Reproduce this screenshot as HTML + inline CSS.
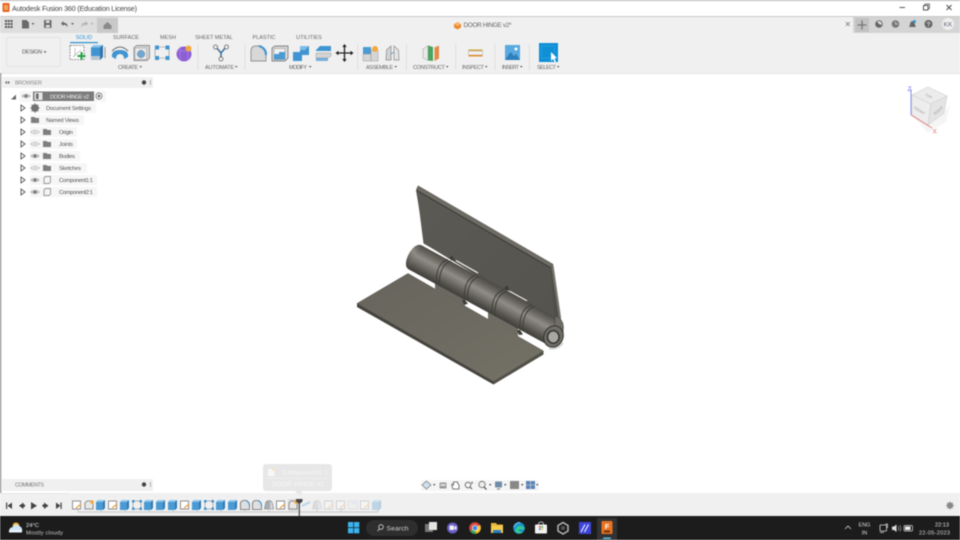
<!DOCTYPE html>
<html><head><meta charset="utf-8"><title>Fusion 360</title>
<style>
html,body{margin:0;padding:0;background:#fff;width:960px;height:540px;overflow:hidden}
svg{display:block;position:absolute;left:0;top:0;filter:blur(.5px)}
text{font-family:"Liberation Sans",sans-serif;fill:#666}
</style></head><body>
<svg width="960" height="540" viewBox="0 0 960 540" xmlns="http://www.w3.org/2000/svg">
<defs>
<linearGradient id="barrel" gradientUnits="userSpaceOnUse" x1="421" y1="245" x2="408" y2="269">
<stop offset="0" stop-color="#4f4d47"/><stop offset=".2" stop-color="#6a6861"/><stop offset=".42" stop-color="#8f8d86"/><stop offset=".62" stop-color="#74726b"/><stop offset=".85" stop-color="#524f4a"/><stop offset="1" stop-color="#3f3e39"/>
</linearGradient>
<linearGradient id="upper" x1="0" y1="0" x2="1" y2="1"><stop offset="0" stop-color="#5c5a54"/><stop offset="1" stop-color="#56544e"/></linearGradient>
<linearGradient id="lower" x1="0" y1="0" x2="1" y2="1"><stop offset="0" stop-color="#66645c"/><stop offset="1" stop-color="#747266"/></linearGradient>
<g id="ext"><path d="M-5 -3 L-3 -5 H4 V3 L2 5 H-5Z" fill="#4a9ad4"/><path d="M2 -3 L4 -5 V3 L2 5Z" fill="#2f79b3"/><path d="M-5 -3 L-3 -5 H4 L2 -3Z" fill="#8cc4ea"/></g>
<g id="sk"><rect x="-4.5" y="-4" width="8" height="8" fill="#fff" stroke="#777" stroke-width=".8"/><path d="M-1 3 L4 -1" stroke="#e8a33d" stroke-width="1.2"/></g>
<g id="comp"><path d="M-4 -2 L-2 -4 H4 V4 H-4Z" fill="#e8e8e8" stroke="#777" stroke-width=".8"/><circle cx="3" cy="-3" r="1.8" fill="#f2a93b"/></g>
<g id="pat"><rect x="-4" y="-4" width="8" height="8" fill="none" stroke="#888" stroke-width=".6"/><rect x="-5" y="-5" width="2.5" height="2.5" fill="#3f94d1"/><rect x="2.5" y="-5" width="2.5" height="2.5" fill="#3f94d1"/><rect x="-5" y="2.5" width="2.5" height="2.5" fill="#3f94d1"/><rect x="2.5" y="2.5" width="2.5" height="2.5" fill="#3f94d1"/></g>
<g id="fil"><path d="M-4.5 4.5 V-1 Q-4.5 -4.5 -1 -4.5 H1 Q4.5 -3 4.5 1 V4.5Z" fill="#dfdfdf" stroke="#6d6d6d" stroke-width=".8"/><path d="M1 -4.5 Q4.5 -3 4.5 1" stroke="#3f94d1" stroke-width="1.2" fill="none"/></g>
<g id="jnt"><path d="M-4.5 4 L-3 -3 L-.5 -4.5 L-.5 4Z" fill="#aab4bc" stroke="#777" stroke-width=".6"/><path d="M4.5 4 L3 -3 L.8 -4.5 L.8 4Z" fill="#d8dde2" stroke="#777" stroke-width=".6"/></g>
<g id="pl"><rect x="-4.5" y="-4" width="9" height="8" fill="#eee" stroke="#aaa" stroke-width=".7"/><rect x="-1" y="-4" width="5.5" height="3.5" fill="#cde"/></g>
<g id="tri"><path d="M-2 -3 L2 0 L-2 3Z" fill="#fff" stroke="#555" stroke-width=".9"/></g>
<g id="eye"><path d="M-4.5 0 Q0 -3.6 4.5 0 Q0 3.6 -4.5 0Z" fill="#c6c6c6" stroke="#999" stroke-width=".5"/><circle r="1.5" fill="#777"/></g>
<g id="eyeo"><path d="M-4.5 0 Q0 -3.6 4.5 0 Q0 3.6 -4.5 0Z" fill="#eee" stroke="#bbb" stroke-width=".6"/><circle r="1.4" fill="#d6d6d6"/></g>
<g id="fold"><path d="M-4 -3 H-.5 L.5 -2 H4 V3 H-4Z" fill="#7f7f7f"/></g>
<g id="cb"><path d="M-3 -2 L-1.5 -3.500 H3.500 V2 L2 3.500 H-3Z" fill="#f4f4f4" stroke="#777" stroke-width=".7"/></g>
</defs>

<!-- Window frame and title -->
<rect width="960" height="540" fill="#fff"/>
<rect width="960" height="1" fill="#b5b5b5"/>
<rect x="2.500" y="3" width="7" height="9" rx="1" fill="#e6641e"/><rect x="4" y="5" width="4" height="5" fill="#f5a05f"/>
<text x="12" y="10.800" font-size="7.200" textLength="125" style="fill:#444">Autodesk Fusion 360 (Education License)</text>
<path d="M899.500 7.500H905" stroke="#444" stroke-width=".9"/>
<rect x="923.500" y="5.500" width="4.500" height="4.500" fill="#fff" stroke="#444" stroke-width=".9"/><path d="M925 5V4H929.500V8.500H928.500" fill="none" stroke="#444" stroke-width=".7"/>
<path d="M946.500 5L951.500 10M951.500 5L946.500 10" stroke="#444" stroke-width=".9"/>

<!-- Tab strip -->
<rect y="16" width="960" height="1" fill="#c8c8c8"/>
<rect y="17" width="960" height="56" fill="#f0f0f0"/>
<rect y="17" width="118" height="16" fill="#dedede"/>
<rect x="97" y="18" width="21" height="15" fill="#c9c9c9"/>
<path d="M103.500 25.500L107.500 22L111.500 25.500V29H103.500Z" fill="#8a8a8a"/>
<g fill="#555"><rect x="5" y="20" width="2" height="2"/><rect x="7.800" y="20" width="2" height="2"/><rect x="10.600" y="20" width="2" height="2"/><rect x="5" y="23" width="2" height="2"/><rect x="7.800" y="23" width="2" height="2"/><rect x="10.600" y="23" width="2" height="2"/><rect x="5" y="26" width="2" height="2"/><rect x="7.800" y="26" width="2" height="2"/><rect x="10.600" y="26" width="2" height="2"/></g>
<path d="M22 20H26.500L29 22.500V28.500H22Z" fill="#6a6a6a"/><path d="M31.500 23H34.500L33 25Z" fill="#666"/>
<rect x="44" y="20" width="7.500" height="8" rx=".6" fill="#6c6c6c"/><rect x="46" y="20.500" width="3.500" height="2.500" fill="#ddd"/><rect x="45.800" y="25" width="4" height="2.500" fill="#ddd"/>
<path d="M61 23.500L63.500 21V22.800C66.500 22.800 67.800 24.300 67.500 27.500C66.800 25.500 65.800 24.800 63.500 24.800V26Z" fill="#666"/><path d="M71 23H74L72.500 25Z" fill="#666"/>
<path d="M88 23.500L85.500 21V22.800C82.500 22.800 81.200 24.300 81.500 27.500C82.200 25.500 83.200 24.800 85.500 24.800V26Z" fill="#b0b0b0"/><path d="M90.500 23H93.500L92 25Z" fill="#b0b0b0"/>

<!-- Document tab -->
<path d="M457.500 22L461 24V27.500L457.500 29.500L454 27.500V24Z" fill="#ec8a2c"/><path d="M457.500 22L461 24L457.500 26L454 24Z" fill="#f7b56c"/>
<text x="463.500" y="27" font-size="6.400" textLength="48">DOOR HINGE v2*</text>
<path d="M845.800 22L849.800 26M849.800 22L845.800 26" stroke="#777" stroke-width=".8"/>
<rect x="853" y="17" width="107" height="16" fill="#d4d4d4"/>
<rect x="855" y="18" width="14" height="14" fill="#c2c2c2"/>
<path d="M862 20.500V29.500M857.500 25H866.500" stroke="#777" stroke-width="1.300"/>
<circle cx="879" cy="24" r="3.800" fill="#666"/><path d="M877 21.500A3.300 3.300 0 0 1 881.800 25L879 24Z" fill="#ddd"/>
<circle cx="895.500" cy="24" r="3.800" fill="#777"/><path d="M895.500 21.500V24H898" stroke="#ddd" stroke-width=".7" fill="none"/>
<path d="M909 27C910.200 26 909.800 21 912.500 21C915.200 21 914.800 26 916 27Z" fill="#666"/><circle cx="914.500" cy="21.500" r="1.500" fill="#2a98dd"/>
<circle cx="928.500" cy="24" r="4" fill="#666"/><text x="928.500" y="26.300" font-size="6.500" font-weight="bold" text-anchor="middle" style="fill:#ddd">?</text>
<circle cx="948" cy="24" r="6" fill="#efefef"/><text x="948" y="26.300" font-size="6.500" text-anchor="middle" style="fill:#667">KK</text>

<!-- Design button -->
<rect x="6.500" y="37.500" width="54" height="29" rx="2" fill="#f0f0f0" stroke="#e2e2e2"/>
<text x="22" y="53.500" font-size="5.600" textLength="20" style="fill:#555">DESIGN</text><path d="M43.500 51.200H46.500L45 53Z" fill="#555"/>

<!-- Tabs -->
<g font-size="5.500" text-anchor="middle">
<text x="84" y="39" style="fill:#2b8fd0">SOLID</text>
<text x="126" y="39">SURFACE</text>
<text x="168" y="39">MESH</text>
<text x="214" y="39">SHEET METAL</text>
<text x="264" y="39">PLASTIC</text>
<text x="309" y="39">UTILITIES</text>
</g>
<rect x="70" y="42" width="28" height="1.200" fill="#2b8fd0"/>

<!-- Toolbar icons -->
<rect x="70" y="45.500" width="14" height="14" fill="#fff" stroke="#777" stroke-width=".8" stroke-dasharray="2 1"/><path d="M73 57L81 50M75 48V56" stroke="#aaa" stroke-width=".7"/>
<path d="M81.500 52V60M77.500 56H85.500" stroke="#26a244" stroke-width="2"/>
<path d="M91 47.500L94 45H103V57L100 60H91Z" fill="#3f94d1"/><path d="M91 47.500L94 45H103L100 47.500Z" fill="#88c3ea"/><path d="M100 47.500L103 45V57L100 60Z" fill="#2f75ab"/><path d="M91 56H100V60H91Z" fill="#b9c6cf"/><path d="M105 47V58" stroke="#555" stroke-width=".6"/>
<path d="M112 57Q111 50 120 50Q129 50 128 57L124 59Q124 54 120 54Q116 54 116 59Z" fill="#3f94d1"/><path d="M112 51Q120 43 128 51" stroke="#444" stroke-width=".8" fill="none"/>
<path d="M134 47.500L137 45.500H149.500V58L147 60.500H134Z" fill="#d3d3d3" stroke="#777" stroke-width=".7"/><rect x="135" y="48" width="11.500" height="11.500" fill="#ececec" stroke="#999" stroke-width=".5"/><circle cx="141" cy="54" r="3.800" fill="#6fa8d2" stroke="#888" stroke-width=".5"/>
<path d="M157 47H167M157 58H167M155 49V56M169 49V56" stroke="#888" stroke-width=".6"/><rect x="155" y="45.500" width="4" height="4" fill="#3f94d1"/><rect x="165.500" y="45.500" width="4" height="4" fill="#3f94d1"/><rect x="155" y="56" width="4" height="4" fill="#3f94d1"/><rect x="165.500" y="56" width="4" height="4" fill="#3f94d1"/>
<circle cx="184" cy="54" r="7.500" fill="#8d5fd3"/><path d="M177 51H191M180 47V60M188 47V60" stroke="#a880e3" stroke-width=".7"/><circle cx="188.500" cy="48.500" r="3" fill="#f2a93b"/>
<rect x="197.500" y="44" width=".8" height="26" fill="#dcdcdc"/>
<path d="M221 53L216 47M221 53L226 47M221 53V59" stroke="#3b6f9b" stroke-width="1.500"/><circle cx="215.500" cy="47" r="2" fill="#eee" stroke="#666" stroke-width=".8"/><circle cx="226.500" cy="47" r="2" fill="#eee" stroke="#666" stroke-width=".8"/><circle cx="221" cy="59" r="2" fill="#eee" stroke="#666" stroke-width=".8"/>
<rect x="244.500" y="44" width=".8" height="26" fill="#dcdcdc"/>
<path d="M251 61V51Q251 46 256 46H259Q266 48 266 55V61Z" fill="#d8d8d8" stroke="#777" stroke-width=".7"/><path d="M259 46Q266 48 266 55" stroke="#3f94d1" stroke-width="2.200" fill="none"/>
<path d="M272 48L275 46H288V58L285 61H272Z" fill="#d8d8d8" stroke="#666" stroke-width=".7"/><rect x="274" y="48.500" width="11" height="11" fill="#f2f2f2" stroke="#888" stroke-width=".5"/><path d="M274 59.500V54H279V52H285V59.500Z" fill="#4a9ad4"/>
<path d="M293 52H300V46H309V55H302V61H293Z" fill="#3f94d1"/><path d="M300 46H309L305 50H300Z" fill="#7dbce6"/>
<path d="M316 50L320 46H331V51H316Z" fill="#3f94d1"/><path d="M316 53H331V56L328 58H316Z" fill="#d4d4d4" stroke="#888" stroke-width=".4"/><path d="M316 58H328V61H316Z" fill="#3f94d1" opacity=".7"/>
<path d="M344.500 45V61M336.500 53H352.500" stroke="#222" stroke-width="1.300"/><path d="M344.500 44L342.300 47H346.700ZM344.500 62L342.300 59H346.700ZM335.500 53L338.500 50.800V55.200ZM353.500 53L350.500 50.800V55.200Z" fill="#222"/>
<rect x="357.300" y="44" width=".8" height="26" fill="#dcdcdc"/>
<rect x="363" y="47" width="8" height="7" fill="#4a9ad4"/><path d="M363 54H371V61H363Z" fill="#d5d5d5" stroke="#888" stroke-width=".4"/><path d="M371 50H378V61H371Z" fill="#d5d5d5" stroke="#888" stroke-width=".4"/><circle cx="375" cy="49" r="3" fill="#f2a93b"/>
<path d="M386 60L386.500 50L391 46V60Z" fill="#d3d3d3" stroke="#888" stroke-width=".7"/><path d="M399 60L398.500 50L394 46V60Z" fill="#e4e4e4" stroke="#888" stroke-width=".7"/><path d="M391 54L394 52" stroke="#5a9acb" stroke-width="1"/>
<rect x="406" y="44" width=".8" height="26" fill="#dcdcdc"/>
<path d="M423 49L428 45.500V60.500L423 58Z" fill="#e7e7e7" stroke="#999" stroke-width=".5"/><path d="M428 45.500L433 47V61L428 60.500Z" fill="#4aa35f"/><path d="M434.500 47.500L439 45.500V58.500L434.500 61Z" fill="#e38a46"/>
<rect x="455.300" y="44" width=".8" height="26" fill="#dcdcdc"/>
<rect x="468.500" y="49.500" width="14" height="1.500" fill="#d3a63a"/><rect x="468.500" y="51" width="14" height="4" fill="#f2f2f2" stroke="#999" stroke-width=".4"/><rect x="468.500" y="55" width="14" height="1.500" fill="#e58c2c"/>
<rect x="494.500" y="44" width=".8" height="26" fill="#dcdcdc"/>
<rect x="505" y="45" width="15" height="15" fill="#5aa9de"/><path d="M505 60L510.500 52L514 56L516 54L520 60Z" fill="#2c7fbb"/><circle cx="516" cy="49" r="1.500" fill="#fff"/>
<rect x="529" y="44" width=".8" height="26" fill="#dcdcdc"/>
<rect x="539" y="43" width="19" height="19" fill="#0f8fd6"/><rect x="541.500" y="46" width="13" height="12" fill="none" stroke="#45b0e8" stroke-width=".7" stroke-dasharray="1.500 1"/><path d="M551 52V61L553 59L554.500 62L556 61.400L554.500 58.500L557 58Z" fill="#fff"/>

<!-- Toolbar labels -->
<g font-size="5.500">
<text x="118" y="69" textLength="20">CREATE</text>
<text x="205" y="69" textLength="29">AUTOMATE</text>
<text x="289" y="69" textLength="18">MODIFY</text>
<text x="366" y="69" textLength="27">ASSEMBLE</text>
<text x="413" y="69" textLength="32">CONSTRUCT</text>
<text x="462" y="69" textLength="22">INSPECT</text>
<text x="502" y="69" textLength="17">INSERT</text>
<text x="537" y="69" textLength="19">SELECT</text>
</g>
<g fill="#555"><path d="M139.500 66H142L140.700 67.800Z"/><path d="M235 66H237.500L236.200 67.800Z"/><path d="M309 66H311.500L310.200 67.800Z"/><path d="M394.500 66H397L395.700 67.800Z"/><path d="M446 66H448.500L447.200 67.800Z"/><path d="M485 66H487.500L486.200 67.800Z"/><path d="M520 66H522.500L521.200 67.800Z"/><path d="M557 66H559.500L558.200 67.800Z"/></g>
<rect y="73" width="960" height="1" fill="#e6e6e6"/>

<!-- left edge -->
<rect x="0" y="73" width="1.200" height="443" fill="#8a8a8a"/>

<!-- Browser -->
<rect x="2" y="77" width="151" height="11" rx="1" fill="#f0f0f0"/>
<text x="15" y="84.300" font-size="5.500" textLength="27" style="fill:#888">BROWSER</text>
<path d="M5 82.500L7 81V84ZM10 82.500L8 81V84Z" fill="#555"/>
<circle cx="144" cy="82.500" r="2.200" fill="#444"/><rect x="150" y="80" width=".8" height="5" fill="#999"/>

<rect x="20" y="91" width="86" height="11" fill="#f6f6f6"/>
<path d="M11 99.500L16 94.500V99.500Z" fill="#666"/>
<use href="#eye" x="26" y="96"/>
<rect x="33" y="91.500" width="61" height="9.500" fill="#7b7b7b"/>
<rect x="34.500" y="92.500" width="8" height="7.500" fill="#e6e6e6"/><rect x="36" y="93.500" width="2.500" height="5.500" fill="#666"/>
<text x="50" y="98.500" font-size="5.500" textLength="39" style="fill:#f0f0f0">DOOR HINGE v2</text>
<circle cx="99" cy="96" r="3" fill="#fff" stroke="#555" stroke-width=".7"/><circle cx="99" cy="96" r="1.300" fill="#555"/>

<g fill="#f6f6f6">
<rect x="30" y="103" width="66" height="10"/><rect x="30" y="115" width="54" height="10"/>
<rect x="30" y="127" width="47" height="10"/><rect x="30" y="139" width="47" height="10"/>
<rect x="30" y="151" width="50" height="10"/><rect x="30" y="163" width="57" height="10"/>
<rect x="30" y="175" width="67" height="10"/><rect x="30" y="187" width="67" height="10"/>
</g>
<use href="#tri" x="23" y="108"/><use href="#tri" x="23" y="120"/><use href="#tri" x="23" y="132"/><use href="#tri" x="23" y="144"/><use href="#tri" x="23" y="156"/><use href="#tri" x="23" y="168"/><use href="#tri" x="23" y="180"/><use href="#tri" x="23" y="192"/>
<circle cx="35" cy="108" r="3.800" fill="#6f6f6f"/><circle cx="35" cy="108" r="1.500" fill="#eee"/><path d="M35 103.300V112.700M30.300 108H39.700M31.700 104.700L38.300 111.300M38.300 104.700L31.700 111.300" stroke="#6f6f6f" stroke-width="1"/>
<use href="#fold" x="35" y="120"/>
<use href="#eyeo" x="35" y="132"/><use href="#eyeo" x="35" y="144"/><use href="#eye" x="35" y="156"/><use href="#eyeo" x="35" y="168"/><use href="#eye" x="35" y="180"/><use href="#eye" x="35" y="192"/>
<use href="#fold" x="47" y="132"/><use href="#fold" x="47" y="144"/><use href="#fold" x="47" y="156"/><use href="#fold" x="47" y="168"/>
<use href="#cb" x="47" y="180"/><use href="#cb" x="47" y="192"/>
<g font-size="5.800">
<text x="46" y="110" textLength="45" style="fill:#555">Document Settings</text>
<text x="46" y="122" textLength="33" style="fill:#555">Named Views</text>
<text x="59" y="134" textLength="14" style="fill:#555">Origin</text>
<text x="59" y="146" textLength="14" style="fill:#555">Joints</text>
<text x="59" y="158" textLength="16" style="fill:#555">Bodies</text>
<text x="59" y="170" textLength="22" style="fill:#555">Sketches</text>
<text x="59" y="182" textLength="34" style="fill:#555">Component1:1</text>
<text x="59" y="194" textLength="34" style="fill:#555">Component2:1</text>
</g>

<!-- ViewCube -->
<path d="M912 115L928 125L944 113L950 104L946 122L928 133Z" fill="#eee" opacity=".6"/>
<path d="M928 87L947 96L931 104L912 95Z" fill="#ececec" stroke="#cfcfcf" stroke-width=".6"/>
<path d="M912 95L931 104L928 125L912 115Z" fill="#ededed" stroke="#cfcfcf" stroke-width=".6"/>
<path d="M931 104L947 96L944 113L928 125Z" fill="#e4e4e4" stroke="#cfcfcf" stroke-width=".6"/>
<path d="M911 115V89" stroke="#7d7ff0" stroke-width=".9"/><path d="M911 115L932 128" stroke="#e87f7f" stroke-width=".9"/>
<text x="907.500" y="91" font-size="6.500" style="fill:#6a6cf0">Z</text>
<text x="932.500" y="133.500" font-size="6.500" style="fill:#e06a6a">X</text>
<text x="929" y="97.500" font-size="3.600" text-anchor="middle" style="fill:#999" transform="rotate(25 929 96)">TOP</text>
<text x="920" y="112" font-size="3.600" text-anchor="middle" style="fill:#999" transform="rotate(32 920 110)">FRONT</text>
<text x="938" y="112" font-size="3.600" text-anchor="middle" style="fill:#999" transform="rotate(-40 938 110)">RIGHT</text>

<!-- Hinge: upper leaf -->
<path d="M418 185.500L553 264L561 320L553 322L425 244L416 190Z" fill="#504e48"/>
<path d="M416.800 190.500L550 267.500L554.500 317L423.500 243.500Z" fill="url(#upper)"/>
<path d="M418.500 186L553 264L550 267.500L416.500 190Z" fill="#6d6b64"/>
<path d="M416.800 190.500L550 267.500" stroke="#34332e" stroke-width=".9"/>
<path d="M552.500 266L560 318" stroke="#77756d" stroke-width="2.200"/>

<!-- Hinge: lower leaf -->
<path d="M357 303.500L408 273.500L543.500 351L493.500 381.500Z" fill="url(#lower)" stroke="#504f49" stroke-width=".5"/>
<path d="M357 303.500V307L493.500 384.500V381.500Z" fill="#44433d"/>
<path d="M493.500 381.500V384.500L543.500 354.500V351Z" fill="#504f48"/>
<!-- leaf tabs reaching the knuckles -->
<path d="M435 288.600V282L465 298V306.400Z" fill="#6a6860"/>
<path d="M488 319.700V312L518 328V337Z" fill="#6e6c62"/>

<!-- Hinge: barrel -->
<ellipse cx="414.500" cy="257" rx="6.500" ry="13.500" transform="rotate(28 414.500 257)" fill="url(#barrel)"/>
<path d="M421 245L561 321L548 345L408 269Z" fill="url(#barrel)"/>
<path d="M456 260.500L478 273M507 289.800L527 300.800" stroke="#fff" stroke-width="1.100"/>
<g fill="none" stroke="#3f3e39" stroke-width="1">
<path d="M448 259.500Q435.500 263.500 436.500 283.500"/><path d="M451 261Q438.500 265.500 439.500 285.500"/>
<path d="M476 275Q463.500 279 464.500 299"/><path d="M479 276.500Q466.500 281 467.500 301"/>
<path d="M503.500 290Q491 294 492 314"/><path d="M506.500 291.500Q494 296 495 316"/>
<path d="M531.500 305Q519 309 520 329"/><path d="M534.500 306.500Q522 311 523 331"/>
</g>
<path d="M449 258L452 255.500L455 261L451 260Z" fill="#3c3b36"/><path d="M504 288L507 285.500L510 291L506 290Z" fill="#3c3b36"/>
<path d="M462 300L464 304.500L468 304L465 300Z" fill="#3c3b36"/><path d="M517 330L519 335L523 334.500L520 330Z" fill="#3c3b36"/>
<path d="M555 316Q563 318 563.500 327Q563.500 332 562 338L555 325Z" fill="#6f6d66" stroke="#3f3e39" stroke-width=".5"/>
<ellipse cx="553.500" cy="336.500" rx="9.500" ry="11" transform="rotate(25 553.500 336.500)" fill="#6f6d66" stroke="#35342f" stroke-width="1"/>
<ellipse cx="553.300" cy="337" rx="5.800" ry="6.200" fill="#a8a7a1" stroke="#33322d" stroke-width="1.500"/>
<path d="M563 343Q558 350 549 348.500" stroke="#d4d4d4" stroke-width="1.800" fill="none"/>

<!-- Comments -->
<rect x="2" y="479" width="151" height="12" rx="1" fill="#f0f0f0"/>
<text x="15" y="486.500" font-size="5.500" textLength="29" style="fill:#777">COMMENTS</text>
<circle cx="144" cy="484.500" r="2.200" fill="#444"/><rect x="150" y="482" width=".8" height="5" fill="#999"/>

<!-- Nav bar -->
<rect x="421" y="480" width="118" height="11" fill="#f5f5f5"/>
<path d="M426.500 481L431 485L426.500 489L422 485Z" fill="#cfe0ee" stroke="#777" stroke-width=".7"/><path d="M433 484H435.500L434.200 486Z" fill="#555"/>
<rect x="439.500" y="482.500" width="7" height="6" rx=".8" fill="#999"/><rect x="440.500" y="484" width="5" height="2" fill="#ddd"/>
<path d="M453 489Q451.500 486 452 484L453.500 485V482H457.500V483L459 485V489Z" fill="#fff" stroke="#555" stroke-width=".8"/>
<circle cx="468" cy="485" r="2.800" fill="none" stroke="#555" stroke-width=".8"/><path d="M470 487L472 489" stroke="#555"/><path d="M472 481.500V484M471 482.700H473" stroke="#555" stroke-width=".6"/>
<circle cx="482" cy="484.500" r="3.200" fill="#eee" stroke="#666" stroke-width=".8"/><path d="M484 487L486.500 489.500" stroke="#333" stroke-width="1"/><path d="M489 484H491.500L490.200 486Z" fill="#555"/>
<rect x="495" y="481.500" width="7" height="6" rx=".6" fill="#6f8da8"/><path d="M497 489H500" stroke="#777"/><path d="M504 484H506.500L505.200 486Z" fill="#555"/>
<rect x="510" y="481" width="9" height="8" fill="#888"/><path d="M521 484H523.500L522.200 486Z" fill="#555"/>
<rect x="526" y="481" width="9" height="8" fill="#5a83b4"/><path d="M530.500 481V489M526 485H535" stroke="#ddd" stroke-width=".6"/><path d="M536 484H538.500L537.200 486Z" fill="#555"/>

<!-- Timeline -->
<rect y="493" width="960" height="23" fill="#f0f0f0"/>
<rect y="493" width="70" height="1" fill="#e4e4e4"/>
<g fill="#444">
<rect x="6" y="502.500" width="1.200" height="6.500"/><path d="M12 502.500V509L7.500 505.700Z"/>
<path d="M19 505.700L23.500 502.500V509Z"/><rect x="23" y="504.500" width="2" height="2.400"/>
<path d="M31 502V509.500L37 505.700Z"/>
<path d="M48.500 505.700L44 502.500V509Z"/><rect x="42.500" y="504.500" width="2" height="2.400"/>
<path d="M56 502.500V509L60.500 505.700Z"/><rect x="60.500" y="502.500" width="1.200" height="6.500"/>
</g>
<path d="M78 509V512H378V509" fill="none" stroke="#bcbcbc" stroke-width=".7"/>
<path d="M101 512V509M125 512V509M149 512V509M173 512V509M197 512V509M221 512V509M245 512V509M269 512V509M293 512V509M317 512V509M341 512V509" stroke="#bcbcbc" stroke-width=".6"/>
<rect x="288" y="499" width="12" height="12" fill="#dcdcdc"/>
<g transform="translate(0 505)">
<use href="#sk" x="77"/><use href="#comp" x="89"/><use href="#ext" x="101"/><use href="#sk" x="113"/><use href="#ext" x="125"/><use href="#pat" x="137"/><use href="#ext" x="149"/><use href="#ext" x="161"/><use href="#ext" x="173"/><use href="#sk" x="185"/><use href="#ext" x="197"/><use href="#pat" x="209"/><use href="#ext" x="221"/><use href="#ext" x="233"/><use href="#fil" x="245"/><use href="#fil" x="257"/><use href="#jnt" x="269"/><use href="#sk" x="281"/><use href="#comp" x="293"/>
<g opacity=".3"><path d="M302 506L310 502" stroke="#3f94d1" stroke-width="2" transform="translate(0 -505)"/><use href="#jnt" x="317"/><use href="#sk" x="329"/><use href="#sk" x="341"/><use href="#pl" x="353"/><use href="#sk" x="365"/><use href="#ext" x="377"/></g>
</g>
<rect x="298.700" y="500" width="1.200" height="16" fill="#444"/><path d="M296 499H302.500V501.500L299.300 504L296 501.500Z" fill="#444"/>
<circle cx="950" cy="505.500" r="3" fill="#888"/><circle cx="950" cy="505.500" r="1.200" fill="#f0f0f0"/><path d="M950 501.500V509.500M946 505.500H954M947.200 502.700L952.800 508.300M952.800 502.700L947.200 508.300" stroke="#888"/>

<!-- Tooltip -->
<rect x="263" y="464" width="69" height="27" rx="3" fill="#e7e7e7"/>
<path d="M295 491H303L299 495Z" fill="#e7e7e7"/>
<rect x="268" y="469" width="6.500" height="7" fill="#f7f7f7"/><circle cx="273.500" cy="469.500" r="1.500" fill="#f8e7c4"/>
<text x="282" y="474.500" font-size="6.500" textLength="46" style="fill:#f8f8f8">Component2:1</text>
<rect x="267" y="478" width="62" height=".7" fill="#f2f2f2"/>
<text x="272" y="486" font-size="6.500" textLength="52" style="fill:#f8f8f8">DOOR HINGE v2</text>

<!-- Taskbar -->
<rect y="516" width="960" height="24" fill="#1c1c1c"/>
<circle cx="16" cy="526" r="3.500" fill="#f3b23c"/><path d="M9 532Q9 527 13 527Q15 522 19 526Q23 527 22 532Z" fill="#cfe4f8"/><path d="M9 530H22V532.500H9Z" fill="#eaf3fb"/>
<text x="26" y="527" font-size="5.800" style="fill:#e8e8e8">24°C</text>
<text x="26" y="534.500" font-size="5.800" textLength="37" style="fill:#c8c8c8">Mostly cloudy</text>
<g fill="#3ab3ee"><rect x="348" y="522" width="5.300" height="5.300"/><rect x="354" y="522" width="5.300" height="5.300"/><rect x="348" y="528" width="5.300" height="5.300"/><rect x="354" y="528" width="5.300" height="5.300"/></g>
<rect x="366" y="520" width="52" height="16" rx="8" fill="#2e2e2e"/>
<circle cx="381" cy="527" r="2.300" fill="none" stroke="#ddd" stroke-width=".8"/><path d="M379.500 529L377.500 531" stroke="#ddd" stroke-width=".8"/>
<text x="386.500" y="530.500" font-size="6.800" textLength="22" style="fill:#cfcfcf">Search</text>
<rect x="425" y="524" width="8" height="8" fill="#777"/><rect x="429" y="522" width="8" height="8" fill="#e4e4e4"/>
<circle cx="452.500" cy="528" r="5.500" fill="#6a5fc8"/><rect x="449.500" y="525.500" width="4.500" height="4.500" rx=".6" fill="#f0f0f0"/><path d="M454.500 527L456.500 525.800V530L454.500 529Z" fill="#f0f0f0"/>
<circle cx="475" cy="528" r="5.800" fill="#e0473a"/><path d="M475 528L470 531Q472.500 534.500 476 533.700Z" fill="#3aa757"/><path d="M475 528L476 533.700Q480.800 532.500 480.800 528Q480.800 525.500 480 525Z" fill="#f7c52d"/><circle cx="475" cy="528" r="2.700" fill="#3f83e8" stroke="#fff" stroke-width=".7"/>
<path d="M491 523H496L497 524.500H503V526H491Z" fill="#e9b93a"/><rect x="491" y="526" width="12" height="7" fill="#f5cb4e"/><rect x="493" y="530" width="8" height="3" fill="#2a7fc4"/>
<circle cx="519" cy="528" r="5.800" fill="#1a8fce"/><path d="M515 530Q517 525 521 526Q525 527 524.800 529.500H518.500Q518.800 532 523 532Q520 534.500 517 533Q514.500 532 515 530Z" fill="#34c98f"/><path d="M514 527Q516 522.500 520 522.500" stroke="#7ddcf2" stroke-width="1" fill="none"/>
<rect x="535" y="524.500" width="12" height="9" rx="1" fill="#f2f2f2"/><path d="M538.500 524.500Q538.500 522 541 522Q543.500 522 543.500 524.500" stroke="#ddd" fill="none" stroke-width=".8"/><rect x="539" y="526" width="1.700" height="1.700" fill="#e84c3d"/><rect x="541.300" y="526" width="1.700" height="1.700" fill="#3eb35c"/><rect x="539" y="528.300" width="1.700" height="1.700" fill="#2d8fe0"/><rect x="541.300" y="528.300" width="1.700" height="1.700" fill="#f4c236"/>
<path d="M563 522.500L568 525.500V531L563 534L558 531V525.500Z" fill="none" stroke="#b5b5b5" stroke-width="1.500"/><circle cx="563" cy="528" r="2" fill="#555"/>
<rect x="579" y="522" width="12" height="12" fill="#3e46d8"/><path d="M581 532L585 524.500M584.500 532L588.500 524.500" stroke="#eef" stroke-width="1.100"/>
<rect x="597" y="518" width="20" height="22" rx="1" fill="#333"/>
<rect x="601.500" y="521" width="11" height="13" rx="1" fill="#e8721f"/><rect x="604" y="530.500" width="6" height="2" fill="#6c3410"/>
<text x="607" y="529" font-size="7.500" font-weight="bold" text-anchor="middle" style="fill:#fff">F</text>
<rect x="603" y="537.500" width="8" height="1.500" rx=".7" fill="#58c4f2"/>

<!-- Tray -->
<path d="M845 529L848 526L851 529" fill="none" stroke="#ccc" stroke-width=".8"/>
<text x="864.500" y="526.500" font-size="5.500" text-anchor="middle" style="fill:#d8d8d8">ENG</text>
<text x="864.500" y="534.500" font-size="5.500" text-anchor="middle" style="fill:#d8d8d8">IN</text>
<rect x="880" y="525" width="6.500" height="6" rx=".6" fill="none" stroke="#ddd" stroke-width=".8"/><path d="M885.500 524H887.500V528" fill="none" stroke="#ddd" stroke-width=".7"/><path d="M880 532.500H884" stroke="#ddd" stroke-width=".7"/>
<path d="M892 526.500H894L896.500 524.500V532L894 530H892Z" fill="#ddd"/><path d="M898 526Q899.500 528.200 898 530.500M899.800 525Q901.800 528.200 899.800 531.500" fill="none" stroke="#aaa" stroke-width=".6"/>
<rect x="904" y="525.500" width="8.500" height="5.500" rx="1" fill="#1c1c1c" stroke="#ddd" stroke-width=".7"/><rect x="905" y="526.500" width="5.500" height="3.500" fill="#eee"/>
<text x="949" y="526.500" font-size="5.600" text-anchor="end" style="fill:#e4e4e4">22:13</text>
<text x="950" y="534.500" font-size="5.600" text-anchor="end" textLength="31" style="fill:#d8d8d8">22-05-2023</text>
</svg>
</body></html>
